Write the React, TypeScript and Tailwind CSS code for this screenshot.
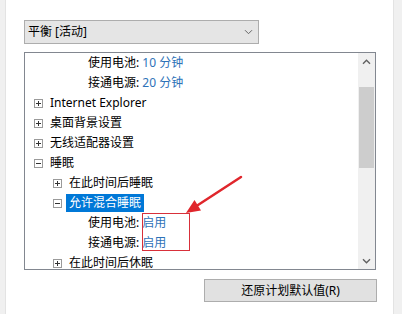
import type { ReactNode } from "react";

const font = { fontFamily: '"Noto Sans", "Noto Sans CJK SC", sans-serif' };

function Toggle({ open }: { open: boolean }) {
  return (
    <svg width="9" height="9" viewBox="0 0 9 9" className="shrink-0">
      <rect x="0.5" y="0.5" width="8" height="8" fill="#fff" stroke="#9a9a9a" />
      <path d="M2 4.5h5" stroke="#333" />
      {!open && <path d="M4.5 2v5" stroke="#333" />}
    </svg>
  );
}

function Row({ pad, toggle, children }: { pad: string; toggle?: "open" | "closed"; children: ReactNode }) {
  return (
    <div className={`flex h-5 items-center gap-[7px] whitespace-nowrap ${pad}`}>
      {toggle && <Toggle open={toggle === "open"} />}
      {children}
    </div>
  );
}

function Setting({ label, value }: { label: string; value: string }) {
  return (
    <Row pad="pl-[63px]">
      <span>
        {label}: <span className="text-[#2e72b8]">{value}</span>
      </span>
    </Row>
  );
}

export default function App() {
  return (
    <div className="relative flex h-[314px] w-[402px] overflow-hidden bg-white text-[12px] text-black" style={font}>
      <div className="w-[6px] shrink-0 border-r border-[#e3e3e3] bg-[#f0f0f0]" />

      <div className="flex flex-1 flex-col pl-[18px] pr-[17px] pt-[20px]">
        <div className="flex h-[24px] w-[235px] items-center justify-between border border-[#adadad] bg-[#e5e5e5] pl-[3px] pr-[5px]">
          <span>平衡 [活动]</span>
          <svg width="9" height="6" viewBox="0 0 9 6">
            <path d="M1 1.2l3.5 3.5L8 1.2" fill="none" stroke="#666" />
          </svg>
        </div>

        <div className="mt-[8px] flex h-[218px] w-[352px] border border-[#828790]">
          <div className="flex-1 overflow-hidden">
            <Setting label="使用电池" value="10 分钟" />
            <Setting label="接通电源" value="20 分钟" />
            <Row pad="pl-[9px]" toggle="closed">Internet Explorer</Row>
            <Row pad="pl-[9px]" toggle="closed">桌面背景设置</Row>
            <Row pad="pl-[9px]" toggle="closed">无线适配器设置</Row>
            <Row pad="pl-[9px]" toggle="open">睡眠</Row>
            <Row pad="pl-[28px]" toggle="closed">在此时间后睡眠</Row>
            <Row pad="pl-[28px]" toggle="open">
              <span className="-ml-[3px] flex h-[18px] items-center bg-[#0078d7] px-[3px] text-white">允许混合睡眠</span>
            </Row>
            <Setting label="使用电池" value="启用" />
            <Setting label="接通电源" value="启用" />
            <Row pad="pl-[28px]" toggle="closed">在此时间后休眠</Row>
          </div>

          <div className="flex w-[17px] shrink-0 flex-col bg-[#f0f0f0]">
            <div className="flex h-[17px] items-center justify-center">
              <svg width="9" height="6" viewBox="0 0 9 6">
                <path d="M1 4.8l3.5-3.5L8 4.8" fill="none" stroke="#606060" strokeWidth="1.4" />
              </svg>
            </div>
            <div className="mx-[1px] mt-[17px] h-[81px] bg-[#cdcdcd]" />
            <div className="flex-1" />
            <div className="flex h-[17px] items-center justify-center">
              <svg width="9" height="6" viewBox="0 0 9 6">
                <path d="M1 1.2l3.5 3.5L8 1.2" fill="none" stroke="#606060" strokeWidth="1.4" />
              </svg>
            </div>
          </div>
        </div>

        <div className="-mr-[1px] mt-[9px] flex h-[23px] w-[173px] items-center justify-center self-end border border-[#adadad] bg-[#e1e1e1]">
          还原计划默认值(R)
        </div>
      </div>

      <div className="w-[9px] shrink-0 border-l border-[#e3e3e3] bg-[#f0f0f0]" />

      {/* annotation */}
      <div className="absolute left-[142px] top-[213px] h-[38px] w-[48px] border border-[#d8303a]" />
      <svg className="pointer-events-none absolute left-0 top-0" width="402" height="314" viewBox="0 0 402 314">
        <line x1="241" y1="177" x2="198" y2="205" stroke="#e0262c" strokeWidth="2.5" strokeLinecap="round" />
        <polygon points="186,213 201,210.5 194.5,200" fill="#e0262c" />
      </svg>
    </div>
  );
}
